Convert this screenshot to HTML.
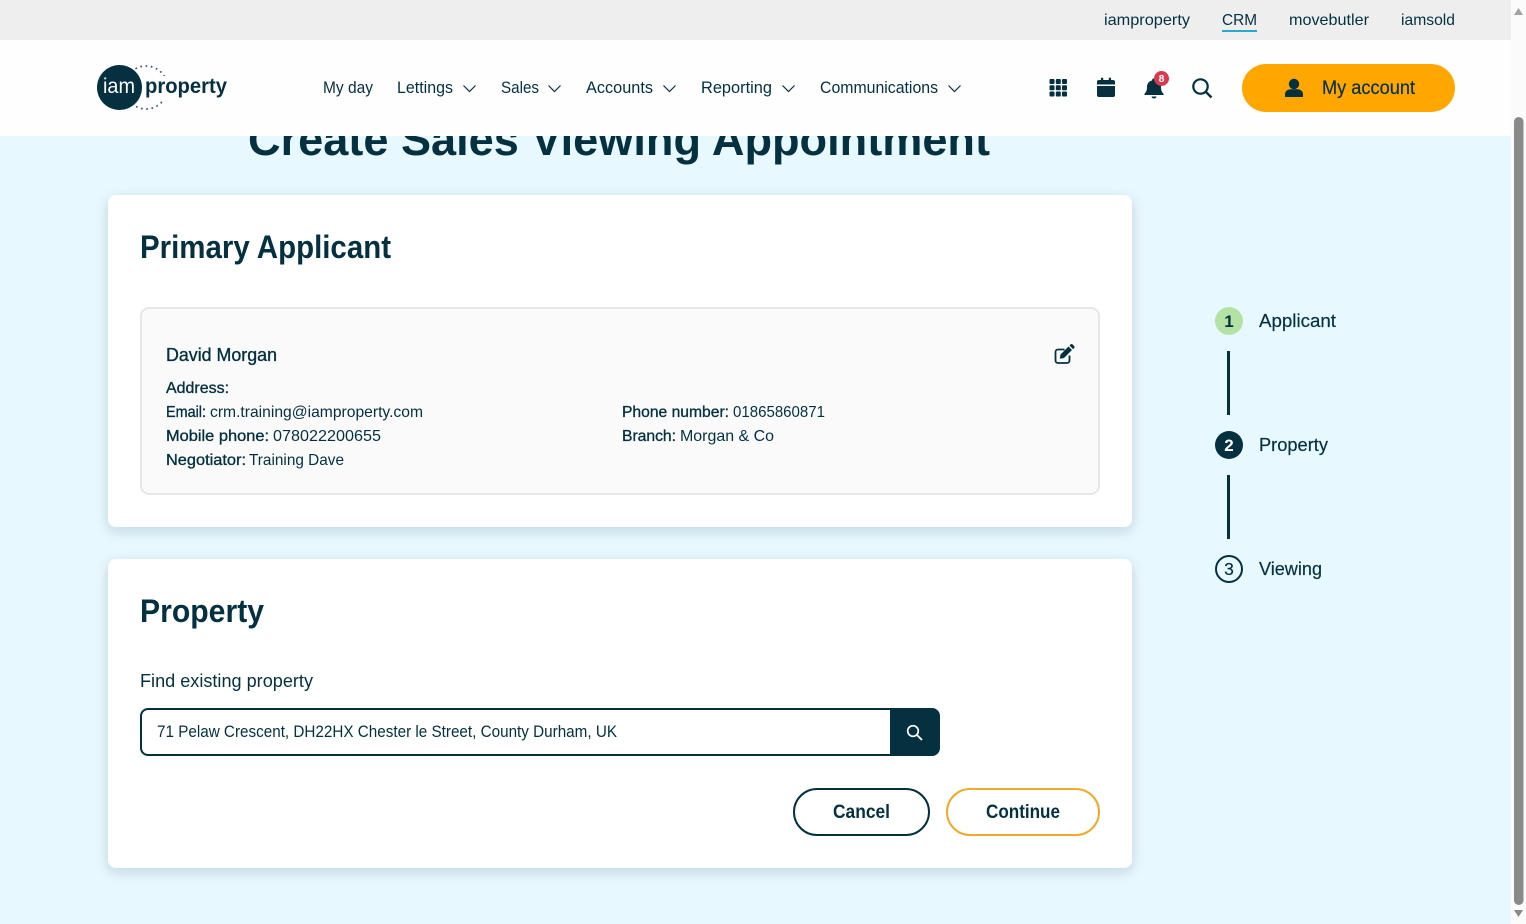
<!DOCTYPE html>
<html lang="en">
<head>
<meta charset="utf-8">
<title>Create Sales Viewing Appointment</title>
<style>
html,body{margin:0;padding:0;width:1526px;height:924px;overflow:hidden;background:#e7f8fe;font-family:"Liberation Sans",sans-serif}
svg{position:absolute;left:0;top:0;display:block}
text{font-family:"Liberation Sans",sans-serif;fill:#04303f}
.b{font-weight:bold}
.m{stroke:#04303f;stroke-width:.35px}
.s{stroke:#04303f;stroke-width:.18px}
</style>
</head>
<body>
<svg width="1526" height="924" viewBox="0 0 1526 924" xmlns="http://www.w3.org/2000/svg">
<defs>
<filter id="sh" x="-5%" y="-10%" width="110%" height="120%"><feDropShadow dx="0" dy="4" stdDeviation="6" flood-color="#04303f" flood-opacity="0.16"/></filter>
</defs>
<rect width="1526" height="924" fill="#e7f8fe"/>

<!-- page title -->
<text class="b" x="248" y="155" font-size="45" textLength="742" lengthAdjust="spacingAndGlyphs">Create Sales Viewing Appointment</text>

<!-- header -->
<rect x="0" y="40" width="1511" height="96" fill="#fefefe"/>
<rect x="0" y="0" width="1511" height="40" fill="#eeeeee"/>
<text x="1104" y="25" font-size="16" textLength="86" lengthAdjust="spacingAndGlyphs">iamproperty</text>
<text x="1222" y="25" font-size="16" textLength="35" lengthAdjust="spacingAndGlyphs">CRM</text>
<rect x="1222" y="30" width="35" height="2" fill="#2aa9c9"/>
<text x="1289" y="25" font-size="16" textLength="80" lengthAdjust="spacingAndGlyphs">movebutler</text>
<text x="1401" y="25" font-size="16" textLength="54" lengthAdjust="spacingAndGlyphs">iamsold</text>

<!-- logo -->
<circle cx="146" cy="87.500" r="21.500" fill="none" stroke="#04303f" stroke-width="1.700" stroke-dasharray="1.700 3.600" opacity=".8"/>
<circle cx="119.500" cy="87.500" r="22.500" fill="#04303f"/>
<text x="103" y="93" font-size="21" textLength="32" lengthAdjust="spacingAndGlyphs" style="fill:#fff">iam</text>
<rect x="143" y="76" width="84" height="24" fill="#fefefe"/>
<text class="b" x="145" y="93" font-size="21" textLength="82" lengthAdjust="spacingAndGlyphs">property</text>

<!-- nav -->
<g font-size="16.500">
<text x="323" y="93" textLength="50" lengthAdjust="spacingAndGlyphs">My day</text>
<text x="397" y="93" textLength="56" lengthAdjust="spacingAndGlyphs">Lettings</text>
<text x="501" y="93" textLength="38" lengthAdjust="spacingAndGlyphs">Sales</text>
<text x="586" y="93" textLength="67" lengthAdjust="spacingAndGlyphs">Accounts</text>
<text x="701" y="93" textLength="71" lengthAdjust="spacingAndGlyphs">Reporting</text>
<text x="820" y="93" textLength="118" lengthAdjust="spacingAndGlyphs">Communications</text>
</g>
<g fill="none" stroke="#04303f" stroke-width="1.200">
<path d="M463.500 85.500l6 6 6-6"/>
<path d="M548.500 85.500l6 6 6-6"/>
<path d="M663.500 85.500l6 6 6-6"/>
<path d="M782.500 85.500l6 6 6-6"/>
<path d="M948.500 85.500l6 6 6-6"/>
</g>

<!-- header icons -->
<g fill="#04303f">
<rect x="1049.500" y="79" width="5" height="5" rx="1"/><rect x="1055.800" y="79" width="5" height="5" rx="1"/><rect x="1062" y="79" width="5" height="5" rx="1"/>
<rect x="1049.500" y="85.300" width="5" height="5" rx="1"/><rect x="1055.800" y="85.300" width="5" height="5" rx="1"/><rect x="1062" y="85.300" width="5" height="5" rx="1"/>
<rect x="1049.500" y="91.500" width="5" height="5" rx="1"/><rect x="1055.800" y="91.500" width="5" height="5" rx="1"/><rect x="1062" y="91.500" width="5" height="5" rx="1"/>
<path d="M1097 84.500v-2.500a2 2 0 0 1 2-2h2v-2.200h2.200V80h5.600v-2.200h2.200V80h2a2 2 0 0 1 2 2v2.500zM1097 86h18v9a2 2 0 0 1-2 2h-14a2 2 0 0 1-2-2z"/>
<path d="M1154 78.500a2 2 0 0 1 2 2c3.500 .8 5 3.500 5 6.500 0 4 1.300 5.500 2.500 6.800v1.200h-19v-1.200c1.200-1.300 2.500-2.800 2.500-6.800 0-3 1.500-5.700 5-6.500a2 2 0 0 1 2-2zM1151.500 96.500h5a2.500 2 0 0 1-5 0z"/>
</g>
<circle cx="1161.500" cy="78.500" r="7.500" fill="#d8394e"/>
<text class="b" x="1161.500" y="82" font-size="10.500" text-anchor="middle" style="fill:#fff">8</text>
<circle cx="1200.500" cy="86.500" r="7.200" fill="none" stroke="#04303f" stroke-width="2.200"/>
<path d="M1205.800 91.800l5.700 5.700" stroke="#04303f" stroke-width="2.400" fill="none"/>

<!-- account button -->
<rect x="1242" y="64" width="213" height="48" rx="24" fill="#ffa600"/>
<g fill="#04303f"><path d="M1285 97v-2.800c0-3.200 3-5 5.500-5h7c2.500 0 5.500 1.800 5.500 5V97z"/><circle cx="1294" cy="84" r="5.200"/></g>
<text class="s" x="1322" y="94" font-size="19" textLength="93" lengthAdjust="spacingAndGlyphs">My account</text>

<!-- primary applicant card -->
<rect x="108" y="195" width="1024" height="332" rx="8" fill="#fff" filter="url(#sh)"/>
<text class="b" x="140" y="258" font-size="32" textLength="251" lengthAdjust="spacingAndGlyphs">Primary Applicant</text>
<rect x="141" y="308" width="958" height="186" rx="8" fill="#fafafa" stroke="#e6e8e8" stroke-width="2"/>
<text class="m" x="166" y="361" font-size="18" textLength="111" lengthAdjust="spacingAndGlyphs">David Morgan</text>
<g transform="translate(-1 0)">
<path d="M1065.500 349.500h-6.500a2.500 2.500 0 0 0-2.500 2.500v8.500a2.500 2.500 0 0 0 2.500 2.500h9a2.500 2.500 0 0 0 2.500-2.500v-5" fill="none" stroke="#04303f" stroke-width="1.800"/>
<path d="M1061.500 354.500l8-8 3.500 3.500-8 8-4.200 .7zM1070.500 345.500l1-1a1.500 1.500 0 0 1 2.100 0l1.500 1.500a1.500 1.500 0 0 1 0 2.100l-1 1z" fill="#04303f"/>
</g>
<g font-size="16">
<text class="m" x="166" y="393" textLength="63" lengthAdjust="spacingAndGlyphs">Address:</text>
<text class="m" x="166" y="417" textLength="40" lengthAdjust="spacingAndGlyphs">Email:</text>
<text x="210" y="417" textLength="213" lengthAdjust="spacingAndGlyphs">crm.training@iamproperty.com</text>
<text class="m" x="166" y="441" textLength="103" lengthAdjust="spacingAndGlyphs">Mobile phone:</text>
<text x="273" y="441" textLength="108" lengthAdjust="spacingAndGlyphs">078022200655</text>
<text class="m" x="166" y="465" textLength="80" lengthAdjust="spacingAndGlyphs">Negotiator:</text>
<text x="249" y="465" textLength="95" lengthAdjust="spacingAndGlyphs">Training Dave</text>
<text class="m" x="622" y="417" textLength="107" lengthAdjust="spacingAndGlyphs">Phone number:</text>
<text x="733" y="417" textLength="92" lengthAdjust="spacingAndGlyphs">01865860871</text>
<text class="m" x="622" y="441" textLength="54" lengthAdjust="spacingAndGlyphs">Branch:</text>
<text x="680" y="441" textLength="94" lengthAdjust="spacingAndGlyphs">Morgan &amp; Co</text>
</g>

<!-- property card -->
<rect x="108" y="559" width="1024" height="309" rx="8" fill="#fff" filter="url(#sh)"/>
<text class="b" x="140" y="622" font-size="32" textLength="124" lengthAdjust="spacingAndGlyphs">Property</text>
<text x="140" y="687" font-size="18" textLength="173" lengthAdjust="spacingAndGlyphs">Find existing property</text>
<path d="M890 709h-742a7 7 0 0 0-7 7v32a7 7 0 0 0 7 7h742" fill="#fff" stroke="#04303f" stroke-width="2"/>
<text x="157" y="737" font-size="16.500" textLength="460" lengthAdjust="spacingAndGlyphs">71 Pelaw Crescent, DH22HX Chester le Street, County Durham, UK</text>
<path d="M890 708h42a8 8 0 0 1 8 8v32a8 8 0 0 1-8 8h-42z" fill="#04303f"/>
<circle cx="913" cy="731" r="5.300" fill="none" stroke="#fff" stroke-width="1.700"/>
<path d="M917 735l5 5" stroke="#fff" stroke-width="1.900" fill="none"/>
<rect x="794" y="789" width="135" height="46" rx="23" fill="#fff" stroke="#04303f" stroke-width="2"/>
<text class="b" x="833" y="818" font-size="19" textLength="57" lengthAdjust="spacingAndGlyphs">Cancel</text>
<rect x="947" y="789" width="152" height="46" rx="23" fill="#fff" stroke="#f0a92a" stroke-width="2"/>
<text class="b" x="986" y="818" font-size="19" textLength="74" lengthAdjust="spacingAndGlyphs">Continue</text>

<!-- stepper -->
<circle cx="1229" cy="321" r="14" fill="#b4e2a4"/>
<text x="1229" y="327" font-size="17" text-anchor="middle" style="font-weight:bold">1</text>
<text class="s" x="1259" y="327" font-size="18.500" textLength="77" lengthAdjust="spacingAndGlyphs">Applicant</text>
<rect x="1227" y="351" width="3" height="64" fill="#04303f"/>
<circle cx="1229" cy="445" r="14" fill="#04303f"/>
<text x="1229" y="451" font-size="17" text-anchor="middle" style="fill:#fff;font-weight:bold">2</text>
<text class="s" x="1259" y="451" font-size="18.500" textLength="69" lengthAdjust="spacingAndGlyphs">Property</text>
<rect x="1227" y="475" width="3" height="64" fill="#04303f"/>
<circle cx="1229" cy="569" r="13" fill="none" stroke="#04303f" stroke-width="2"/>
<text class="s" x="1229" y="575" font-size="17.500" text-anchor="middle">3</text>
<text class="s" x="1259" y="575" font-size="18.500" textLength="63" lengthAdjust="spacingAndGlyphs">Viewing</text>

<!-- scrollbar -->
<rect x="1511" y="0" width="15" height="924" fill="#fbfbfb"/>
<path d="M1518.500 8l4.500 7h-9z" fill="#a3a3a3"/>
<rect x="1514" y="117" width="9.500" height="788" rx="4.700" fill="#8a8a8a"/>
<path d="M1518.500 917l-4.500-7h9z" fill="#8a8a8a"/>
</svg>
</body>
</html>
